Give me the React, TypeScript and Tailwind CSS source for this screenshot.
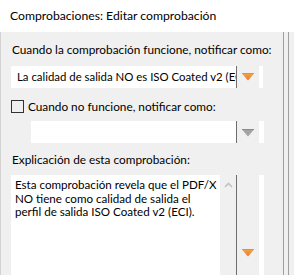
import { FC, ReactNode } from 'react'

const font = "font-['Lato',sans-serif]"

const Arrow: FC<{ gray?: boolean }> = ({ gray }) => (
  <svg width="12" height="8" viewBox="0 0 12 8">
    <defs>
      <linearGradient id="org" x1="0" y1="0" x2="0" y2="1">
        <stop offset="0" stopColor="#f4a04c" />
        <stop offset="1" stopColor="#f07a1a" />
      </linearGradient>
    </defs>
    <path d="M0 0.5 H12 L6 7.5 Z" fill={gray ? '#a3a3a3' : 'url(#org)'} />
    <path d="M0 0.5 H12" stroke={gray ? '#8c8c8c' : '#f58a2a'} strokeWidth="1" />
  </svg>
)

type ComboProps = {
  children?: ReactNode,
  fieldWidth: string,
  gray?: boolean,
}

const Combo: FC<ComboProps> = ({ children, fieldWidth, gray }) => {
  return (
    <div className="flex h-[22px] bg-white">
      <div className={`${fieldWidth} flex items-center overflow-hidden whitespace-nowrap pl-[6px] text-[11.4px]`}>
        {children}
      </div>
      <div className="w-px bg-[#6e6e6e]" />
      <div className="flex w-[22px] items-center justify-center bg-[#f0f0f0] pt-px">
        <Arrow gray={gray} />
      </div>
      <div className="w-[4px] bg-white" />
    </div>
  )
}

const App: FC = () => {
  return (
    <div className={`${font} h-[275px] w-[294px] overflow-hidden text-black`}>
      <div className="h-[32px] bg-white pt-[7px] pl-[10px] text-[12.2px]">
        Comprobaciones: Editar comprobación
      </div>
      <div className="flex h-[243px] bg-[#f0f0f0]">
        <div className="w-[283px] border-l border-[#d2d2d2] pl-[10px] text-[11.8px]">
          <div className="mt-[9px] pl-px">Cuando la comprobación funcione, notificar como:</div>
          <div className="mt-[7px] w-[252px]">
            <Combo fieldWidth="w-[225px]">La calidad de salida NO es ISO Coated v2 (ECI)</Combo>
          </div>

          <div className="mt-[10px] flex items-center gap-[4px]">
            <div className="h-[13px] w-[13px] border border-[#333333]" />
            <span>Cuando no funcione, notificar como:</span>
          </div>
          <div className="mt-[6px] ml-[20px] w-[233px]">
            <Combo fieldWidth="w-[205px]" gray />
          </div>

          <div className="mt-[8px] pl-px">Explicación de esta comprobación:</div>
          <div className="mt-[6px] flex h-[100px] w-[253px] bg-white">
            <div className="w-[209px] pt-[3px] pl-[4px]">
              <div className="whitespace-nowrap text-[11.6px] leading-[13.7px]">
                Esta comprobación revela que el PDF/X
                <br />
                NO tiene como calidad de salida el
                <br />
                perfil de salida ISO Coated v2 (ECI).
              </div>
            </div>
            <div className="flex w-[16px] justify-center bg-[#f0f0f0] pt-[7px]">
              <svg width="9" height="6" viewBox="0 0 9 6">
                <path d="M1 5 L4.5 1.5 L8 5" fill="none" stroke="#c2c2c2" strokeWidth="1.6" />
              </svg>
            </div>
            <div className="w-px bg-[#6e6e6e]" />
            <div className="flex w-[22px] justify-center bg-[#f0f0f0] pt-[74px]">
              <Arrow />
            </div>
            <div className="w-[5px] bg-white" />
          </div>
        </div>
        <div className="w-px bg-[#a0a0a0]" />
        <div className="w-[4px]" />
        <div className="w-px bg-[#a0a0a0]" />
      </div>
    </div>
  )
}

export default App
